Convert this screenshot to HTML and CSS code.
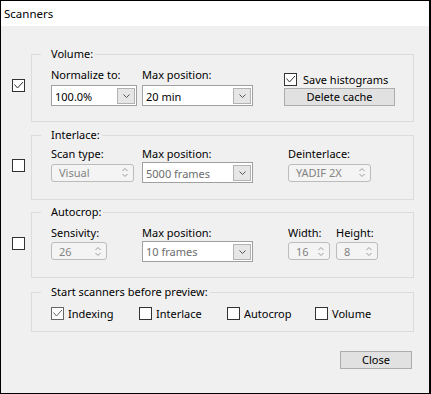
FILE: index.html
```html
<!DOCTYPE html>
<html lang="en">
<head>
    <meta charset="UTF-8">
    <meta name="viewport" content="width=device-width, initial-scale=1.0">
    <title>Scanners</title>
    <link rel="stylesheet" href="styles.css">
</head>
<body>
    <div class="window">
        <div class="titlebar">Scanners</div>

        <div class="content">
            <!-- Volume -->
            <div class="scanner scanner-volume">
                <div class="scanner-check">
                    <span class="check">
                        <svg width="11" height="11" viewBox="0 0 11 11"><path d="M1.5 4.5l3 3.5 5.5-6" fill="none" stroke="#333"/></svg>
                    </span>
                </div>
                <fieldset class="group group-volume">
                    <legend>Volume:</legend>
                    <div class="fields">
                        <label class="field-label">Normalize to:</label>
                        <label class="field-label">Max position:</label>
                        <div class="side">
                            <div class="checkline">
                                <span class="check">
                                    <svg width="11" height="11" viewBox="0 0 11 11"><path d="M1.5 4.5l3 3.5 5.5-6" fill="none" stroke="#333"/></svg>
                                </span>
                                <span>Save histograms</span>
                            </div>
                            <button class="btn btn-wide">Delete cache</button>
                        </div>
                        <div class="combo combo-norm">
                            <span class="combo-text">100.0%</span>
                            <span class="combo-btn"><svg width="7" height="4" viewBox="0 0 7 4"><path d="M0.5 0.5l3 3 3-3" fill="none" stroke="#555"/></svg></span>
                        </div>
                        <div class="combo combo-pos">
                            <span class="combo-text">20 min</span>
                            <span class="combo-btn"><svg width="7" height="4" viewBox="0 0 7 4"><path d="M0.5 0.5l3 3 3-3" fill="none" stroke="#555"/></svg></span>
                        </div>
                    </div>
                </fieldset>
            </div>

            <!-- Interlace -->
            <div class="scanner">
                <div class="scanner-check"><span class="check"></span></div>
                <fieldset class="group group-interlace">
                    <legend>Interlace:</legend>
                    <div class="fields">
                        <label class="field-label">Scan type:</label>
                        <label class="field-label">Max position:</label>
                        <label class="field-label">Deinterlace:</label>
                        <div class="spin spin-scan">
                            <span>Visual</span>
                            <svg width="6" height="9" viewBox="0 0 6 9"><path d="M0.5 3l2.5-2.5 2.5 2.5M0.5 6l2.5 2.5 2.5-2.5" fill="none" stroke="#9a9a9a"/></svg>
                        </div>
                        <div class="combo combo-pos combo-off">
                            <span class="combo-text">5000 frames</span>
                            <span class="combo-btn"><svg width="7" height="4" viewBox="0 0 7 4"><path d="M0.5 0.5l3 3 3-3" fill="none" stroke="#555"/></svg></span>
                        </div>
                        <div class="spin spin-deint">
                            <span>YADIF 2X</span>
                            <svg width="6" height="9" viewBox="0 0 6 9"><path d="M0.5 3l2.5-2.5 2.5 2.5M0.5 6l2.5 2.5 2.5-2.5" fill="none" stroke="#9a9a9a"/></svg>
                        </div>
                    </div>
                </fieldset>
            </div>

            <!-- Autocrop -->
            <div class="scanner">
                <div class="scanner-check"><span class="check"></span></div>
                <fieldset class="group group-autocrop">
                    <legend>Autocrop:</legend>
                    <div class="fields">
                        <label class="field-label">Sensivity:</label>
                        <label class="field-label">Max position:</label>
                        <label class="field-label">Width:</label>
                        <label class="field-label">Height:</label>
                        <div class="spin spin-sens">
                            <span>26</span>
                            <svg width="6" height="9" viewBox="0 0 6 9"><path d="M0.5 3l2.5-2.5 2.5 2.5M0.5 6l2.5 2.5 2.5-2.5" fill="none" stroke="#9a9a9a"/></svg>
                        </div>
                        <div class="combo combo-pos combo-off">
                            <span class="combo-text">10 frames</span>
                            <span class="combo-btn"><svg width="7" height="4" viewBox="0 0 7 4"><path d="M0.5 0.5l3 3 3-3" fill="none" stroke="#555"/></svg></span>
                        </div>
                        <div class="spin spin-small">
                            <span>16</span>
                            <svg width="6" height="9" viewBox="0 0 6 9"><path d="M0.5 3l2.5-2.5 2.5 2.5M0.5 6l2.5 2.5 2.5-2.5" fill="none" stroke="#9a9a9a"/></svg>
                        </div>
                        <div class="spin spin-small">
                            <span>8</span>
                            <svg width="6" height="9" viewBox="0 0 6 9"><path d="M0.5 3l2.5-2.5 2.5 2.5M0.5 6l2.5 2.5 2.5-2.5" fill="none" stroke="#9a9a9a"/></svg>
                        </div>
                    </div>
                </fieldset>
            </div>

            <!-- Start before preview -->
            <div class="scanner">
                <div class="scanner-check"></div>
                <fieldset class="group group-start">
                    <legend>Start scanners before preview:</legend>
                    <div class="options">
                        <div class="checkline">
                            <span class="check check-dim">
                                <svg width="11" height="11" viewBox="0 0 11 11"><path d="M1.5 4.5l3 3.5 5.5-6" fill="none" stroke="#666"/></svg>
                            </span>
                            <span>Indexing</span>
                        </div>
                        <div class="checkline"><span class="check"></span><span>Interlace</span></div>
                        <div class="checkline"><span class="check"></span><span>Autocrop</span></div>
                        <div class="checkline"><span class="check"></span><span>Volume</span></div>
                    </div>
                </fieldset>
            </div>

            <div class="actions">
                <button class="btn btn-close">Close</button>
            </div>
        </div>
    </div>
</body>
</html>
```

FILE: styles.css
```css
body {
    margin: 0;
    font-family: "Noto Sans", "Segoe UI", sans-serif;
    font-size: 11px;
    color: #000;
    background-color: #f0f0f0;
}

.window {
    width: 431px;
    height: 394px;
    box-sizing: border-box;
    border: 1px solid #000;
    border-right-width: 2px;
    background-color: #f0f0f0;
    display: flex;
    flex-direction: column;
}

.titlebar {
    height: 25px;
    line-height: 25px;
    padding-left: 3px;
    background: #fff;
    font-size: 11.5px;
}

.content {
    flex: 1;
    padding: 20px 15px 0 11px;
    display: flex;
    flex-direction: column;
}

.scanner {
    display: flex;
    gap: 6px;
}

.scanner-check {
    width: 13px;
    padding-top: 8px;
    display: flex;
    align-items: center;
}

.scanner-volume .scanner-check {
    padding-top: 2px;
}

.group {
    flex: 1;
    min-width: 0;
    margin: 0;
    border: 1px solid #dcdcdc;
    padding: 5px 0 15px 9px;
}

.group legend {
    padding: 0 2px 0 10px;
    line-height: 16px;
}

.group-interlace {
    margin-top: 5px;
    padding-top: 3px;
    padding-bottom: 16px;
}

.group-autocrop {
    margin-top: 4px;
    padding-top: 5px;
}

.group-start {
    margin-top: 6px;
    padding-top: 6px;
    padding-bottom: 11px;
}

.fields {
    margin-left: 10px;
    display: grid;
    grid-template-columns: 91px 146px auto;
    grid-template-rows: 16px 21px;
    align-items: center;
}

.group-volume .fields {
    grid-template-columns: 91px 142px auto;
    row-gap: 2px;
}

.group-autocrop .fields {
    grid-template-columns: 91px 146px 48px auto;
    grid-template-rows: 15px 22px;
}

.field-label {
    line-height: 16px;
    white-space: nowrap;
}

.side {
    grid-column: 3;
    grid-row: 1 / span 2;
    align-self: stretch;
    display: flex;
    flex-direction: column;
    justify-content: flex-end;
    gap: 2px;
}

.check {
    width: 13px;
    height: 13px;
    box-sizing: border-box;
    border: 1px solid #333;
    background: #fff;
    display: flex;
    flex: none;
}

.check-dim {
    border-color: #666;
}

.checkline {
    display: flex;
    align-items: center;
    gap: 6px;
    height: 13px;
    line-height: 13px;
    white-space: nowrap;
}

.combo {
    height: 21px;
    box-sizing: border-box;
    border: 1px solid #a0a0a0;
    background: #fff;
    display: flex;
    align-items: center;
    padding: 1px 1px 0 3px;
}

.combo-norm {
    width: 86px;
}

.combo-pos {
    width: 111px;
}

.combo-off .combo-text {
    color: #6d6d6d;
}

.combo-text {
    flex: 1;
    white-space: nowrap;
}

.combo-btn {
    width: 18px;
    height: 16px;
    box-sizing: border-box;
    border: 1px solid #b3b3b3;
    background: #e6e6e6;
    display: flex;
    align-items: center;
    justify-content: center;
}

.spin {
    height: 18px;
    box-sizing: border-box;
    border: 1px solid #bcbcbc;
    border-radius: 3px;
    background: #f4f4f4;
    color: #838383;
    display: flex;
    align-items: center;
    justify-content: space-between;
    padding: 0 5px 0 7px;
}

.spin-scan,
.spin-deint {
    width: 83px;
}

.spin-sens {
    width: 56px;
}

.spin-small {
    width: 42px;
}

.options {
    margin-left: 10px;
    display: grid;
    grid-template-columns: repeat(4, 88px);
    margin-top: 1px;
}

.options .checkline {
    gap: 4px;
}

.btn {
    height: 18px;
    box-sizing: border-box;
    border: 1px solid #adadad;
    background: #e1e1e1;
    font-family: inherit;
    font-size: 11px;
    color: #000;
    padding: 0;
    line-height: 16px;
}

.btn-wide {
    width: 111px;
}

.actions {
    display: flex;
    justify-content: flex-end;
    margin-top: 19px;
    padding-right: 2px;
}

.btn-close {
    width: 72px;
}
```
